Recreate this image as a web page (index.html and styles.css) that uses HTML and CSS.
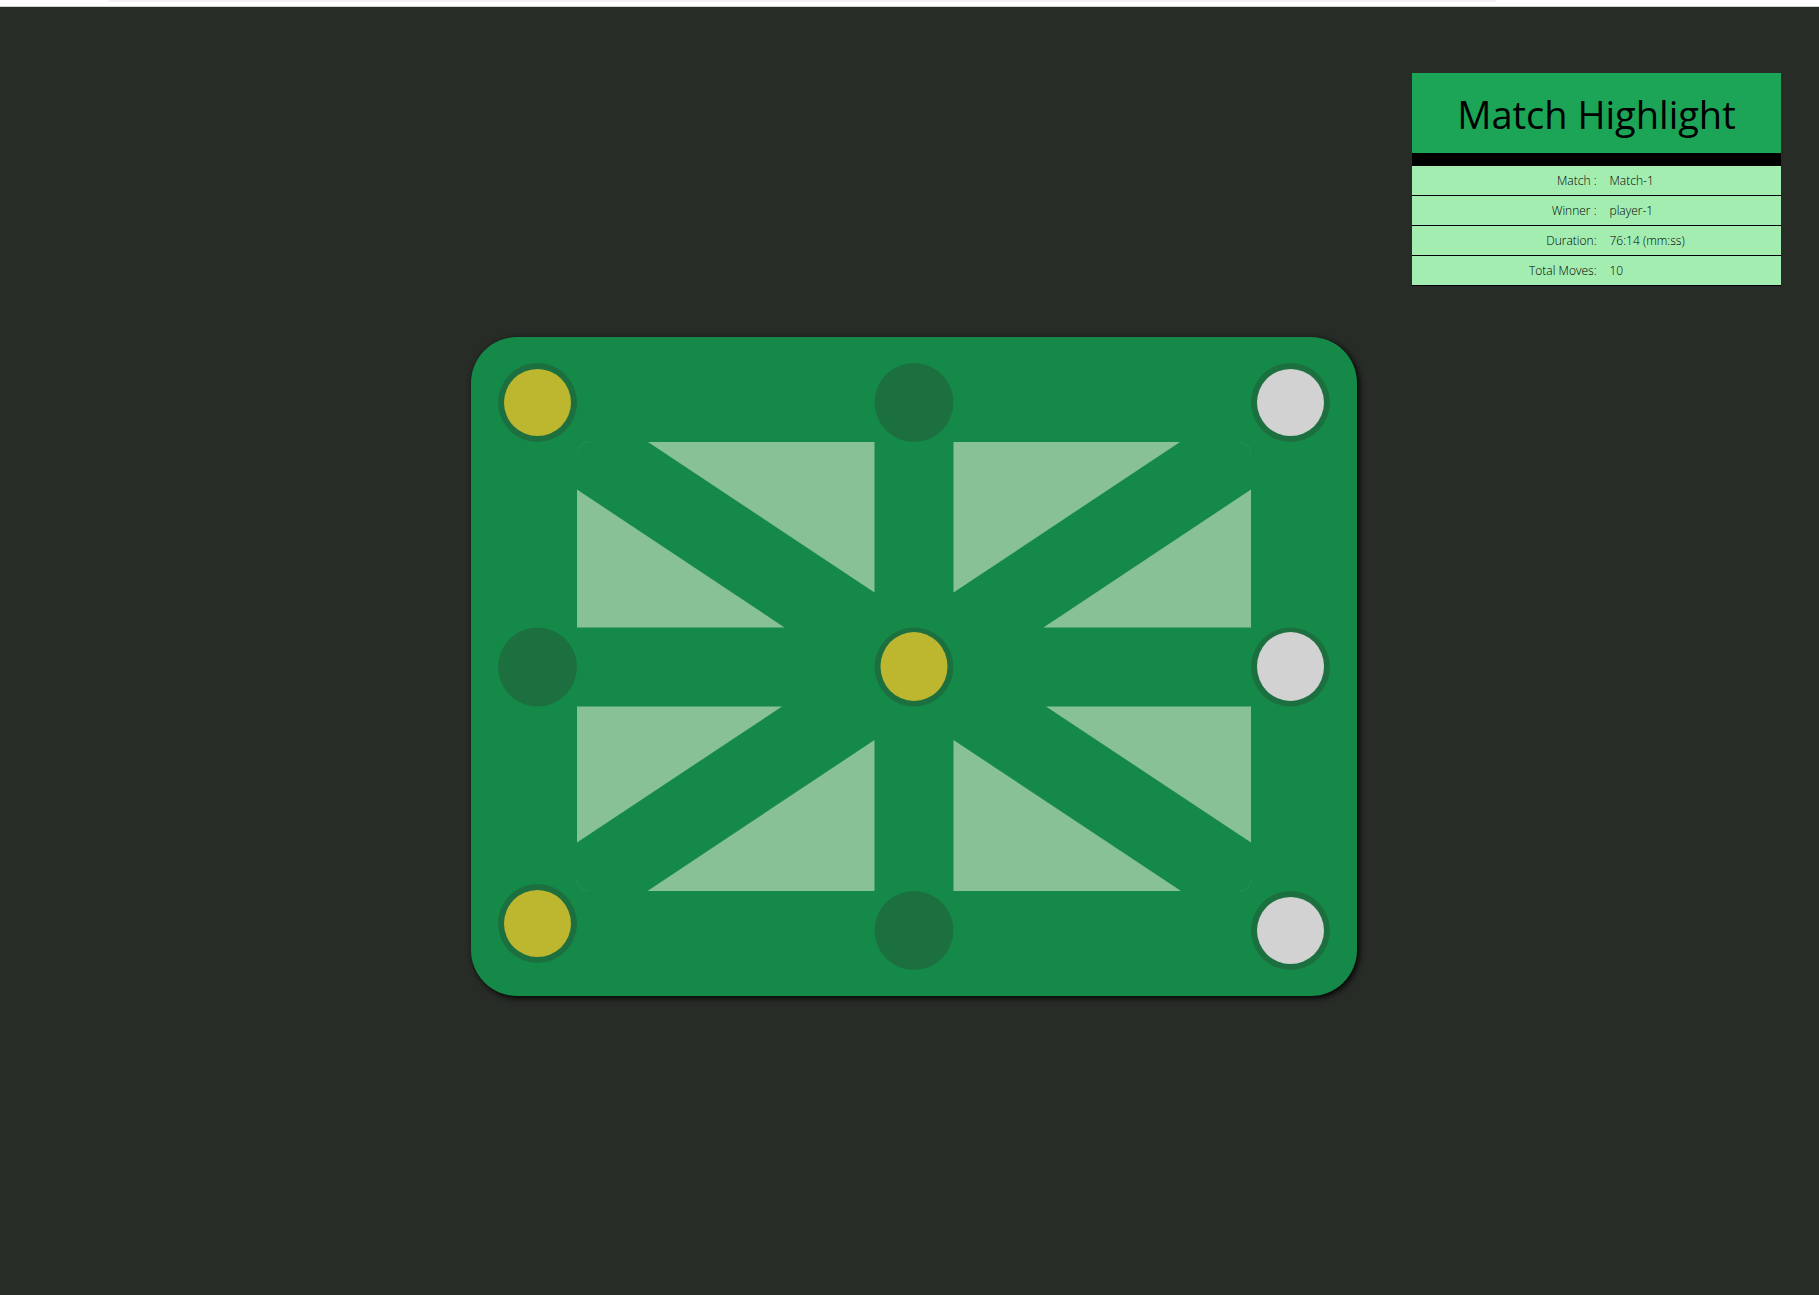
FILE: index.html
```html
<!DOCTYPE html>
<html lang="en">
<head>
<meta charset="utf-8">
<meta name="viewport" content="width=device-width, initial-scale=1">
<title>Match Highlight</title>
<link rel="stylesheet" href="styles.css">
</head>
<body>
<header class="topbar"><div class="topbar-strip"></div></header>
<main class="game">
  <section class="panel">
    <h1 class="panel-title">Match Highlight</h1>
    <table class="stats">
      <tr><th scope="row">Match :</th><td>Match-1</td></tr>
      <tr><th scope="row">Winner :</th><td>player-1</td></tr>
      <tr><th scope="row">Duration:</th><td>76:14 (mm:ss)</td></tr>
      <tr><th scope="row">Total Moves:</th><td>10</td></tr>
    </table>
  </section>
  <div class="board">
    <svg class="board-art" viewBox="0 0 886 659" role="img" aria-label="Game board">
      <g class="field">
        <polygon points="177,105 403.500,105 403.500,255.500"/>
        <polygon points="106,152.500 106,290.500 313.500,290.500"/>
        <polygon points="482.500,105 709,105 482.500,255.500"/>
        <polygon points="780,152.500 780,290.500 572.500,290.500"/>
        <polygon points="106,369.500 311,369.500 106,505.500"/>
        <polygon points="403.500,403 403.500,554 176.500,554"/>
        <polygon points="482.500,403 482.500,554 710,554"/>
        <polygon points="575,369.500 780,369.500 780,505.500"/>
      </g>
      <g class="corners">
        <path d="M106 117A12 12 0 0 1 118 105"/>
        <path d="M768 105A12 12 0 0 1 780 117"/>
        <path d="M106 542A12 12 0 0 0 118 554"/>
        <path d="M780 542A12 12 0 0 1 768 554"/>
      </g>
      <g class="holes">
        <circle cx="66.500" cy="65.500" r="39.500"/>
        <circle cx="443" cy="65.500" r="39.500"/>
        <circle cx="819.500" cy="65.500" r="39.500"/>
        <circle cx="66.500" cy="330" r="39.500"/>
        <circle cx="443" cy="330" r="39.500"/>
        <circle cx="819.500" cy="330" r="39.500"/>
        <circle cx="66.500" cy="586.500" r="39.500"/>
        <circle cx="443" cy="593.500" r="39.500"/>
        <circle cx="819.500" cy="593.500" r="39.500"/>
      </g>
      <g class="gold">
        <circle cx="66.500" cy="65.500" r="33.500"/>
        <ellipse cx="443" cy="329.500" rx="33.500" ry="34.500"/>
        <circle cx="66.500" cy="586.500" r="33.500"/>
      </g>
      <g class="silver">
        <circle cx="819.500" cy="65.500" r="33.500"/>
        <ellipse cx="819.500" cy="329.500" rx="33.500" ry="34.500"/>
        <circle cx="819.500" cy="593.500" r="33.500"/>
      </g>
    </svg>
  </div>
</main>
</body>
</html>
```
FILE: styles.css
```css
* { box-sizing: border-box; }

body {
  margin: 0;
  min-height: 100vh;
  background: #282c27;
  color: #000;
  font-family: "Open Sans", "Noto Sans", sans-serif;
}

.topbar {
  height: 7px;
  padding: 0 323px 0 108px;
  background: #fff;
  border-bottom: 1px solid #cdd2cd;
}

.topbar-strip {
  height: 2px;
  background: #f2f2f2;
}

.game {
  display: grid;
  grid-template-columns: minmax(0, 1fr) minmax(0, 886px) minmax(408px, 1fr);
  row-gap: 51px;
  padding: 66px 0 48px 9px;
}

.panel {
  grid-column: 3;
  justify-self: end;
  width: 369px;
  margin-right: 38px;
}

.panel-title {
  margin: 0;
  height: 93px;
  padding-top: 3px;
  background: #1ca557;
  border-bottom: 13px solid #000;
  font-size: 38px;
  font-weight: 400;
  line-height: 76px;
  text-align: center;
}

.stats {
  width: 100%;
  table-layout: fixed;
  border-spacing: 0;
  background: #a4edb1;
  font-size: 12px;
  line-height: 29px;
}

.stats th,
.stats td {
  width: 50%;
  padding: 0;
  border-bottom: 1px solid #000;
  font-weight: 300;
  text-align: right;
}

.stats td {
  padding-left: 13px;
  text-align: left;
}

.board {
  grid-column: 2;
  background: #158948;
  border-radius: 46px;
  box-shadow: 2px 2px 6px #000;
}

.board-art {
  display: block;
  width: 100%;
  height: auto;
}

.field { fill: #88c294; }
.corners { fill: none; stroke: #239254; }
.holes { fill: #1c7040; }
.gold { fill: #bdb62f; }
.silver { fill: #d2d2d2; }
```
